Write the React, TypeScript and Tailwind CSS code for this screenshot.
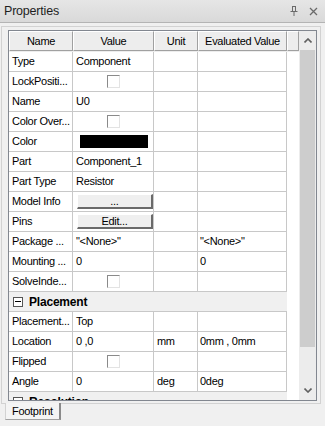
type Row =
  | { kind: "text"; name: string; value?: string; unit?: string; evalv?: string }
  | { kind: "check"; name: string }
  | { kind: "color"; name: string }
  | { kind: "button"; name: string; label: string }
  | { kind: "group"; name: string };

const rows: Row[] = [
  { kind: "text", name: "Type", value: "Component" },
  { kind: "check", name: "LockPositi..." },
  { kind: "text", name: "Name", value: "U0" },
  { kind: "check", name: "Color Over..." },
  { kind: "color", name: "Color" },
  { kind: "text", name: "Part", value: "Component_1" },
  { kind: "text", name: "Part Type", value: "Resistor" },
  { kind: "button", name: "Model Info", label: "..." },
  { kind: "button", name: "Pins", label: "Edit..." },
  { kind: "text", name: "Package ...", value: '"<None>"', evalv: '"<None>"' },
  { kind: "text", name: "Mounting ...", value: "0", evalv: "0" },
  { kind: "check", name: "SolveInde..." },
  { kind: "group", name: "Placement" },
  { kind: "text", name: "Placement...", value: "Top" },
  { kind: "text", name: "Location", value: "0 ,0", unit: "mm", evalv: "0mm , 0mm" },
  { kind: "check", name: "Flipped" },
  { kind: "text", name: "Angle", value: "0", unit: "deg", evalv: "0deg" },
  { kind: "group", name: "Resolution" },
];

function HeaderCell({ w, label }: { w: string; label?: string }) {
  return (
    <div
      className={`${w} h-[20px] shrink-0 flex items-center justify-center bg-[#ededed] border-t border-l border-white border-r border-b border-r-[#a0a0a0] border-b-[#a0a0a0]`}
    >
      {label}
    </div>
  );
}

function Chevron({ up }: { up?: boolean }) {
  return (
    <svg width="8" height="5" viewBox="0 0 8 5" className="block">
      <path
        d={up ? "M0.5 4.5 L4 1 L7.5 4.5" : "M0.5 0.5 L4 4 L7.5 0.5"}
        fill="none"
        stroke="#606060"
        strokeWidth="1.6"
      />
    </svg>
  );
}

function Checkbox() {
  return (
    <div className="w-[13px] h-[13px] mx-auto bg-white border border-t-[#8a8a8a] border-l-[#8a8a8a] border-r-[#e3e3e3] border-b-[#e3e3e3]" />
  );
}

function BodyRow({ row }: { row: Row }) {
  if (row.kind === "group") {
    return (
      <div className="flex h-[20px]">
        <div className="w-[278px] h-[20px] flex items-center bg-[#f0f0f0] border-b border-[#c8c8c8] pl-[4px]">
          <div className="w-[10px] h-[10px] border border-[#555] bg-white flex items-center justify-center mr-[6px]">
            <div className="w-[6px] h-px bg-black" />
          </div>
          <span className="font-bold text-[12px] tracking-[-0.2px]">{row.name}</span>
        </div>
        <div className="w-[12px] bg-white" />
      </div>
    );
  }
  let value: React.ReactNode = null;
  if (row.kind === "text") value = <span className="pl-[3px]">{row.value}</span>;
  if (row.kind === "check") value = <Checkbox />;
  if (row.kind === "color") value = <div className="ml-[7px] w-[68px] h-[13px] bg-black" />;
  if (row.kind === "button")
    value = (
      <div className="ml-[4px] w-[76px] h-[15px] flex items-center justify-center bg-[#efefef] border-t border-l border-white border-r-2 border-b-2 border-r-[#6a6a6a] border-b-[#6a6a6a] leading-none">
        {row.label}
      </div>
    );
  const cell = "h-[20px] shrink-0 flex items-center border-r border-b border-[#c8c8c8] whitespace-nowrap overflow-hidden";
  return (
    <div className="flex h-[20px]">
      <div className={`${cell} w-[64px] pl-[3px]`}>{row.name}</div>
      <div className={`${cell} w-[81px]`}>{value}</div>
      <div className={`${cell} w-[44px] pl-[3px]`}>{row.kind === "text" ? row.unit : null}</div>
      <div className={`${cell} w-[89px] pl-[2px]`}>{row.kind === "text" ? row.evalv : null}</div>
      <div className="w-[12px] bg-white" />
    </div>
  );
}

export default function App() {
  return (
    <div
      className="w-[325px] h-[426px] bg-[#f0f0f0] overflow-hidden text-[11px] tracking-[-0.3px] text-black"
      style={{ fontFamily: '"Liberation Sans", Arial, sans-serif' }}
    >
      {/* title bar */}
      <div className="h-[23px] flex items-center justify-between pl-[4px] pr-[7px] bg-linear-to-b from-[#e6e6e6] to-[#d9d9d9] border-b border-[#b4b4b4]">
        <span className="text-[12.5px] tracking-[-0.2px] text-[#1e1e1e]">Properties</span>
        <div className="flex items-center gap-[11px]">
          <svg width="8" height="10" viewBox="0 0 8 10">
            <path d="M2 0.5 H6 M2.5 0.5 V5 M5.5 0.5 V5 M0.5 5.5 H7.5 M4 5.5 V10" stroke="#6a6a6a" strokeWidth="1" fill="none" />
          </svg>
          <svg width="9" height="9" viewBox="0 0 9 9">
            <path d="M1 1 L8 8 M8 1 L1 8" stroke="#6a6a6a" strokeWidth="1.3" />
          </svg>
        </div>
      </div>

      {/* tab page frame */}
      <div className="ml-[1px] mt-[3px] w-[320px] h-[378px] border border-[#d2d2d2] pl-[6px] pt-[3px]">
        <div className="w-[309px] h-[371px] border border-[#828790] flex overflow-hidden">
          <div className="w-[290px] flex flex-col bg-white overflow-hidden">
            <div className="flex h-[21px] shrink-0 bg-[#ededed]">
              <HeaderCell w="w-[64px]" label="Name" />
              <HeaderCell w="w-[81px]" label="Value" />
              <HeaderCell w="w-[44px]" label="Unit" />
              <HeaderCell w="w-[89px]" label="Evaluated Value" />
              <HeaderCell w="w-[12px]" />
            </div>
            {rows.map((r, i) => (
              <BodyRow key={i} row={r} />
            ))}
          </div>
          {/* scrollbar */}
          <div className="w-[17px] bg-[#ececec] flex flex-col">
            <div className="h-[17px] flex items-center justify-center pt-[2px]">
              <Chevron up />
            </div>
            <div className="mx-[1px] mt-[2px] h-[297px] bg-[#cdcdcd]" />
            <div className="flex-1" />
            <div className="h-[17px] flex items-center justify-center pb-[2px]">
              <Chevron />
            </div>
          </div>
        </div>
      </div>

      {/* tabs */}
      <div className="flex pl-[5px] -mt-[1px]">
        <div className="h-[17px] px-[6px] flex items-center bg-[#f4f4f4] border-l border-[#d2d2d2] border-r-2 border-b border-r-[#8a8a8a] border-b-[#a0a0a0]">
          Footprint
        </div>
      </div>
    </div>
  );
}
